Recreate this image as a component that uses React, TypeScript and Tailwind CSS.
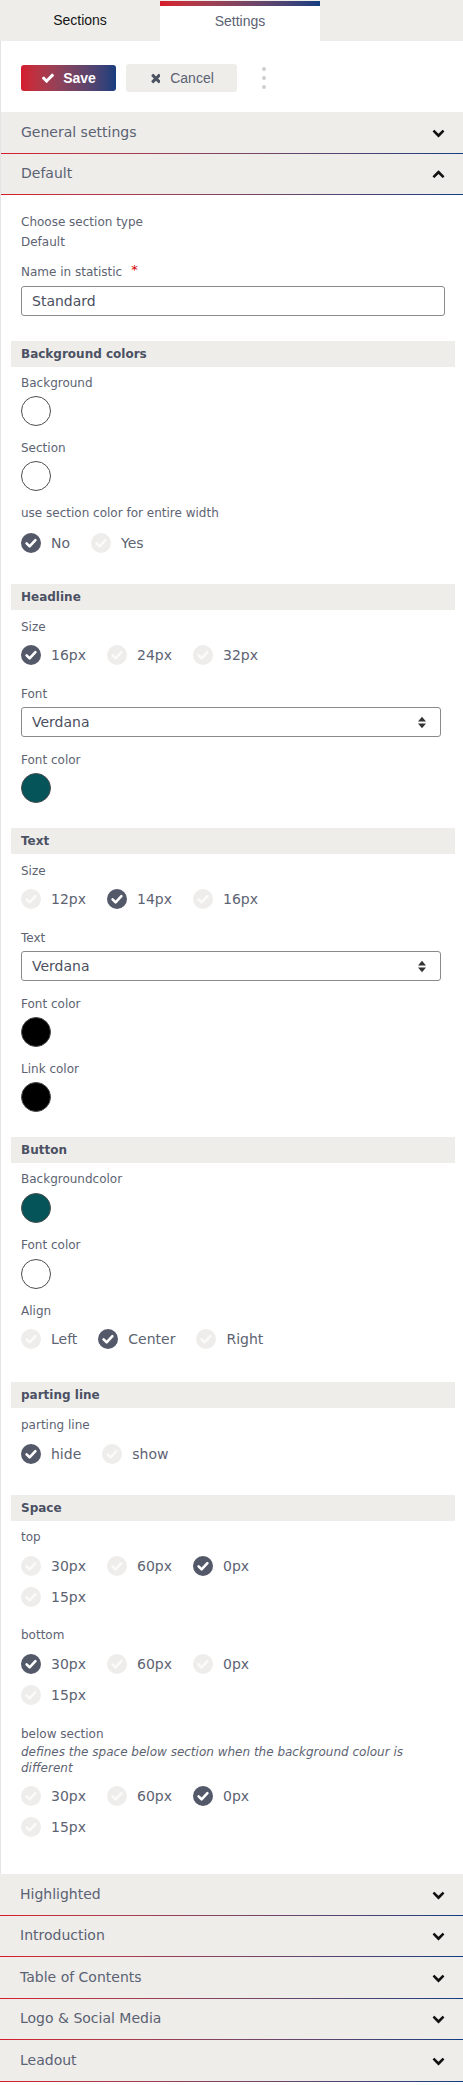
import React from 'react'

const CHEVRON_DOWN =
  'M1683 808l-742 741q-19 19-45 19t-45-19l-742-741q-19-19-19-45.5t19-45.5l166-165q19-19 45-19t45 19l531 531 531-531q19-19 45-19t45 19l166 165q19 19 19 45.5t-19 45.5z'
const CHEVRON_UP =
  'M1683 1331l-166 165q-19 19-45 19t-45-19l-531-531-531 531q-19 19-45 19t-45-19l-166-165q-19-19-19-45.5t19-45.5l742-741q19-19 45-19t45 19l742 741q19 19 19 45.5t-19 45.5z'
const CHECK =
  'M1671 566q0 40-28 68l-724 724-136 136q-28 28-68 28t-68-28l-136-136-362-362q-28-28-28-68t28-68l136-136q28-28 68-28t68 28l294 295 656-657q28-28 68-28t68 28l136 136q28 28 28 68z'
const TIMES =
  'M1490 1322q0 40-28 68l-136 136q-28 28-68 28t-68-28l-294-294-294 294q-28 28-68 28t-68-28l-136-136q-28-28-28-68t28-68l294-294-294-294q-28-28-28-68t28-68l136-136q28-28 68-28t68 28l294 294 294-294q28-28 68-28t68 28l136 136q28 28 28 68t-28 68l-294 294 294 294q28 28 28 68z'

function PanelHeader({ title, open = false }: { title: string; open?: boolean }) {
  return (
    <div className="bg-[#eeedea]">
      <div className="flex h-[40.5px] items-center justify-between pl-[20px] pr-[18px] text-[14px] text-[#5b6273]">
        <span>{title}</span>
        <svg viewBox="0 0 1792 1792" className="h-[13px] w-[13px]">
          <path d={open ? CHEVRON_UP : CHEVRON_DOWN} fill="#111" />
        </svg>
      </div>
      <div className="h-px bg-linear-to-r from-[#d71a2b] to-[#103d82]" />
    </div>
  )
}

function SubHeader({ title, className = '' }: { title: string; className?: string }) {
  return (
    <div
      className={`flex h-[26px] items-center bg-[#eeedea] px-[10px] text-[12px] font-bold text-[#4b5163] ${className}`}
    >
      {title}
    </div>
  )
}

function Label({ children, className = '' }: { children: React.ReactNode; className?: string }) {
  return <div className={`text-[12px] leading-5 text-[#5d6372] ${className}`}>{children}</div>
}

function Swatch({ color, className = '' }: { color: string; className?: string }) {
  return (
    <div
      className={`h-[30px] w-[30px] rounded-full border border-[#4d4d4d] ${color} ${className}`}
    />
  )
}

function RadioIcon({ checked }: { checked: boolean }) {
  return (
    <svg viewBox="0 0 20 20" className="h-[20px] w-[20px] shrink-0">
      <circle cx="10" cy="10" r="10" fill={checked ? '#545969' : '#eeedeb'} />
      <path
        d="M5.6 10.4 L8.6 13.3 L14.4 7.2"
        fill="none"
        stroke={checked ? '#ffffff' : '#fafaf8'}
        strokeWidth="2.6"
        strokeLinecap="round"
        strokeLinejoin="round"
      />
    </svg>
  )
}

function Radios({
  options,
  selected,
  className = '',
}: {
  options: string[]
  selected: string
  className?: string
}) {
  return (
    <div className={`flex flex-wrap gap-x-[21px] gap-y-[11px] ${className}`}>
      {options.map((o) => (
        <div key={o} className="flex h-[20px] items-center">
          <RadioIcon checked={o === selected} />
          <span className="ml-[10px] text-[14px] leading-5 text-[#5d6372]">{o}</span>
        </div>
      ))}
    </div>
  )
}

function Select({ value, className = '' }: { value: string; className?: string }) {
  return (
    <div
      className={`flex h-[30px] w-[420px] items-center justify-between rounded-[3px] border border-[#8a8a8a] pl-[10px] pr-[14px] text-[14px] text-[#4b5060] ${className}`}
    >
      <span>{value}</span>
      <svg viewBox="0 0 8 13" className="h-[13px] w-[8px]">
        <polygon points="0,5.5 4,0.8 8,5.5" fill="#333" />
        <polygon points="0,7.5 8,7.5 4,12.2" fill="#333" />
      </svg>
    </div>
  )
}

export default function App() {
  return (
    <div className="w-[463px] bg-white font-['DejaVu_Sans',sans-serif]">
      {/* tabs */}
      <div className="flex h-[41px] bg-[#eeedea] font-['Liberation_Sans',Arial,sans-serif] text-[14px]">
        <div className="flex w-[160px] items-center justify-center text-[#151515]">Sections</div>
        <div className="mt-px flex w-[160px] flex-col bg-white">
          <div className="h-[5px] bg-linear-to-r from-[#d71a2b] to-[#103d82]" />
          <div className="flex flex-1 items-center justify-center pb-[4px] text-[#5b6273]">
            Settings
          </div>
        </div>
      </div>

      <div className="border-l border-[#e4e4e4]">
        {/* toolbar */}
        <div className="flex h-[71px] items-center pl-[20px] pt-[3px] font-['Liberation_Sans',Arial,sans-serif] text-[14px]">
          <button className="flex h-[26px] w-[95px] items-center justify-center rounded-[3px] bg-linear-to-r from-[#d51a2d] to-[#173d7e] text-white">
            <svg viewBox="0 0 1792 1792" className="mr-[8px] h-[14px] w-[14px]">
              <path d={CHECK} fill="#fff" />
            </svg>
            <span className="font-semibold">Save</span>
          </button>
          <button className="ml-[10px] flex h-[28px] w-[111px] items-center justify-center rounded-[3px] bg-[#eeedea] text-[#5b6273]">
            <svg viewBox="0 0 1408 1792" className="mr-[10px] h-[14px] w-[11px]">
              <path d={TIMES} fill="#4b5160" />
            </svg>
            <span>Cancel</span>
          </button>
          <div className="ml-[25px] flex flex-col gap-[5px]">
            <div className="h-[4px] w-[4px] rounded-full bg-[#d0d0d0]" />
            <div className="h-[4px] w-[4px] rounded-full bg-[#d0d0d0]" />
            <div className="h-[4px] w-[4px] rounded-full bg-[#d0d0d0]" />
          </div>
        </div>

        <PanelHeader title="General settings" />
        <PanelHeader title="Default" open />

        {/* Default content */}
        <div className="pb-[37px] pl-[10px] pr-[8px] pt-[17px]">
          <div className="px-[10px]">
            <Label>Choose section type</Label>
            <Label>Default</Label>
            <Label className="mt-[10px]">
              Name in statistic
              <span className="ml-[9px] inline-block -translate-y-[2px] text-[13px] text-[#d40000]">*</span>
            </Label>
            <div className="mt-[4px] flex h-[30px] items-center rounded-[3px] border border-[#8a8a8a] pl-[10px] text-[14px] text-[#4b5060]">
              Standard
            </div>
          </div>

          <SubHeader title="Background colors" className="mt-[25px]" />
          <div className="px-[10px]">
            <Label className="mt-[6px]">Background</Label>
            <Swatch color="bg-white" className="mt-[3px]" />
            <Label className="mt-[12px]">Section</Label>
            <Swatch color="bg-white" className="mt-[3px]" />
            <Label className="mt-[12px]">use section color for entire width</Label>
            <Radios options={['No', 'Yes']} selected="No" className="mt-[10px]" />
          </div>

          <SubHeader title="Headline" className="mt-[31px]" />
          <div className="px-[10px]">
            <Label className="mt-[7px]">Size</Label>
            <Radios options={['16px', '24px', '32px']} selected="16px" className="mt-[8px]" />
            <Label className="mt-[19px]">Font</Label>
            <Select value="Verdana" className="mt-[3px]" />
            <Label className="mt-[13px]">Font color</Label>
            <Swatch color="bg-[#04545a]" className="mt-[3px]" />
          </div>

          <SubHeader title="Text" className="mt-[25px]" />
          <div className="px-[10px]">
            <Label className="mt-[7px]">Size</Label>
            <Radios options={['12px', '14px', '16px']} selected="14px" className="mt-[8px]" />
            <Label className="mt-[19px]">Text</Label>
            <Select value="Verdana" className="mt-[3px]" />
            <Label className="mt-[13px]">Font color</Label>
            <Swatch color="bg-black" className="mt-[3px]" />
            <Label className="mt-[12px]">Link color</Label>
            <Swatch color="bg-black" className="mt-[3px]" />
          </div>

          <SubHeader title="Button" className="mt-[25px]" />
          <div className="px-[10px]">
            <Label className="mt-[6px]">Backgroundcolor</Label>
            <Swatch color="bg-[#04545a]" className="mt-[4px]" />
            <Label className="mt-[12px]">Font color</Label>
            <Swatch color="bg-white" className="mt-[4px]" />
            <Label className="mt-[12px]">Align</Label>
            <Radios options={['Left', 'Center', 'Right']} selected="Center" className="mt-[8px]" />
          </div>

          <SubHeader title="parting line" className="mt-[33px]" />
          <div className="px-[10px]">
            <Label className="mt-[7px]">parting line</Label>
            <Radios options={['hide', 'show']} selected="hide" className="mt-[9px]" />
          </div>

          <SubHeader title="Space" className="mt-[31px]" />
          <div className="px-[10px]">
            <Label className="mt-[6px]">top</Label>
            <Radios
              options={['30px', '60px', '0px', '15px']}
              selected="0px"
              className="mt-[9px] w-[260px]"
            />
            <Label className="mt-[18px]">bottom</Label>
            <Radios
              options={['30px', '60px', '0px', '15px']}
              selected="30px"
              className="mt-[9px] w-[260px]"
            />
            <Label className="mt-[19px]">below section</Label>
            <div className="text-[12px] italic leading-[16px] text-[#5d6372]">
              defines the space below section when the background colour is different
            </div>
            <Radios
              options={['30px', '60px', '0px', '15px']}
              selected="0px"
              className="mt-[10px] w-[260px]"
            />
          </div>
        </div>
      </div>

      <PanelHeader title="Highlighted" />
      <PanelHeader title="Introduction" />
      <PanelHeader title="Table of Contents" />
      <PanelHeader title="Logo & Social Media" />
      <PanelHeader title="Leadout" />
    </div>
  )
}
